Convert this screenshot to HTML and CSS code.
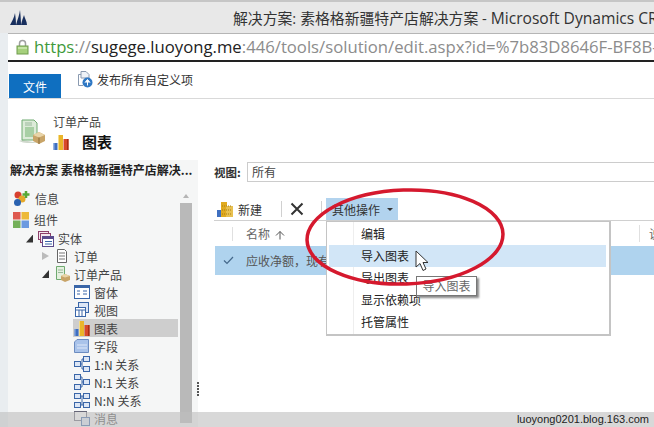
FILE: index.html
```html
<!DOCTYPE html>
<html lang="zh">
<head>
<meta charset="utf-8">
<title>解决方案</title>
<link rel="stylesheet" href="styles.css">
</head>
<body>
<svg class="defs" width="0" height="0">
  <defs>
    <symbol id="chart" viewBox="0 0 16 16">
      <rect x="0.500" y="9" width="4" height="7" fill="#3f6fc0"/>
      <rect x="0.500" y="9" width="1" height="7" fill="#8fb0e6"/>
      <rect x="5" y="1" width="5" height="15" fill="#eab52a"/>
      <rect x="5" y="1" width="1" height="15" fill="#f5dc88"/>
      <rect x="10.500" y="5" width="5" height="11" fill="#d8482a"/>
      <rect x="14" y="5" width="1.500" height="11" fill="#a82c14"/>
    </symbol>
  </defs>
</svg>

<header class="titlebar">
  <svg class="crm-logo" width="17" height="15" viewBox="0 0 17 15"><path d="M0 15C2 11 4 8 5 3C5.500 7 6 9 6 15ZM6 15C7.500 9 9.500 5 10 0C10.500 5 11 9 11 15ZM11 15C12 10 13 8 14 5C14.500 8 17 11 17 15Z" fill="#182f5e"/></svg>
  <div class="window-title">解决方案: 素格格新疆特产店解决方案 - <span class="title-latin">Microsoft Dynamics CRM</span></div>
</header>

<div class="shell">
  <div class="addressbar">
    <svg width="13" height="16" viewBox="0 0 13 16"><path d="M3.500 7V4.500a3 3 0 0 1 6 0V7" fill="none" stroke="#a0a0a0" stroke-width="1.500"/><rect x="1" y="7" width="11" height="8" fill="#a6d07c" stroke="#6f9c4c"/><rect x="2" y="8" width="9" height="2" fill="#c4e4a4"/></svg>
    <div class="url"><span class="url-https">https</span><span class="url-muted">://</span><span class="url-host">sugege.luoyong.me</span><span class="url-muted">:446/tools/solution/edit.aspx?id=%7b83D8646F-BF8B-</span></div>
  </div>

  <div class="ribbon">
    <div class="file-tab">文件</div>
    <div class="publish">
      <svg width="17" height="17" viewBox="0 0 17 17"><path d="M2.500 3.500H5M2.500 3.500V14.500H7" fill="none" stroke="#8a9ab0"/><path d="M5 0.500H10L13 3.500V7H5Z" fill="#eef2f7" stroke="#8a9ab0"/><circle cx="11.500" cy="11.500" r="5" fill="#2f78c4"/><path d="M11.500 14.500V10M9 11.500 11.500 8.500 14 11.500" fill="#fff" stroke="#fff"/></svg>
      <span>发布所有自定义项</span>
    </div>
  </div>

  <div class="pagehead">
    <svg class="head-icon" width="26" height="26" viewBox="0 0 26 26"><path d="M0 22C3 23 5 24 8 24L20 24 3 21Z" fill="#cfd8cc"/><path d="M3 1H15L18 4V21H3Z" fill="#dcebd8" stroke="#6faa70"/><rect x="6" y="8" width="9" height="10" fill="#a8cfa4"/><path d="M6 4H13M6 6H13" stroke="#9ab89c"/><path d="M20 13 26 16V22L20 25 14 22V16Z" fill="#c8a468"/><path d="M14 16 20 18.500 26 16 20 13Z" fill="#e8d4a8"/><path d="M20 18.500V25" stroke="#8a6a36"/></svg>
    <div class="head-text">
      <div class="head-parent">订单产品</div>
      <div class="head-row">
        <svg width="16" height="16"><use href="#chart"/></svg>
        <span class="head-title">图表</span>
      </div>
    </div>
  </div>

  <div class="workspace">
    <aside class="sidebar">
      <div class="side-title">解决方案 素格格新疆特产店解决...</div>
      <div class="side-body">
        <ul class="tree">
          <li class="lvl0"><svg width="17" height="17" viewBox="0 0 17 17"><circle cx="5" cy="5" r="3.500" fill="#d8402f"/><circle cx="9" cy="9" r="3.500" fill="#e6a828"/><circle cx="4.500" cy="12.500" r="3.500" fill="#2a62b0"/><path d="M13 1V8M9.500 4.500H16.500" stroke="#58a838" stroke-width="2.500"/></svg><span>信息</span></li>
          <li class="lvl0"><svg width="16" height="16" viewBox="0 0 16 16"><rect width="7.500" height="7.500" fill="#de5a50"/><rect x="8.500" width="7.500" height="7.500" fill="#edb93a"/><rect y="8.500" width="7.500" height="7.500" fill="#74b05a"/><rect x="8.500" y="8.500" width="7.500" height="7.500" fill="#6c9ae0"/></svg><span>组件</span></li>
          <li class="lvl1"><i class="tri open"></i><svg width="16" height="16" viewBox="0 0 16 16"><rect x="0.500" y="0.500" width="10" height="8" fill="#f3e6ee" stroke="#8c3f6a"/><rect x="2.500" y="2.500" width="10" height="9" fill="#f3e6ee" stroke="#8c3f6a"/><rect x="4.500" y="5.500" width="11" height="10" fill="#fff" stroke="#5a4a8c"/><rect x="5" y="6" width="10" height="2" fill="#5a4a8c"/><path d="M7 10.500H14M7 13H14" stroke="#3a66a8"/></svg><span>实体</span></li>
          <li class="lvl2"><i class="tri closed"></i><svg width="16" height="16" viewBox="0 0 16 16"><path d="M3.500 1.500H10.500L12.500 3.500V14.500H3.500Z" fill="#fff" stroke="#666"/><path d="M5 5H11M5 8H11M5 11H11" stroke="#777"/></svg><span>订单</span></li>
          <li class="lvl2"><i class="tri open"></i><svg width="16" height="16" viewBox="0 0 16 16"><path d="M2.500 0.500H10.500V13.500H2.500Z" fill="#e4f0df" stroke="#6faa70"/><path d="M4 4H9M4 6.500H9" stroke="#9ab89c"/><path d="M11 8 16 10V14L11 16 7 14V10Z" fill="#c8a468"/><path d="M7 10 11 11.500 16 10 11 8Z" fill="#e8d4a8"/></svg><span>订单产品</span></li>
          <li class="lvl3"><svg width="16" height="16" viewBox="0 0 16 16"><rect x="0.500" y="1.500" width="15" height="13" fill="#fff" stroke="#3a66a8"/><rect x="1" y="2" width="14" height="2" fill="#3a66a8"/><path d="M3 7H6M3 10H6M9 7H13M9 10H13" stroke="#3a66a8"/></svg><span>窗体</span></li>
          <li class="lvl3"><svg width="16" height="16" viewBox="0 0 16 16"><rect x="4.500" y="0.500" width="10" height="10" fill="#dce6f5" stroke="#3a66a8"/><rect x="1.500" y="5.500" width="10" height="9" fill="#fff" stroke="#3a66a8"/><path d="M2 8H11M5 8V14M8 8V14" stroke="#3a66a8"/></svg><span>视图</span></li>
          <li class="lvl3 current"><svg width="16" height="16"><use href="#chart"/></svg><span>图表</span></li>
          <li class="lvl3"><svg width="16" height="16" viewBox="0 0 16 16"><path d="M3 1.500H14.500V14.500H0.500V4Z" fill="#a9c3ea" stroke="#6c8cc0"/><path d="M3 7H13M3 10H13" stroke="#dfe8f8"/></svg><span>字段</span></li>
          <li class="lvl3"><svg width="16" height="16" viewBox="0 0 16 16"><g fill="#dce6f5" stroke="#3a66a8"><rect x="0.500" y="5.500" width="6" height="5"/><rect x="9.500" y="0.500" width="6" height="5"/><rect x="9.500" y="10.500" width="6" height="5"/></g><path d="M6.500 8H8V3H9.500M8 8V13H9.500" fill="none" stroke="#3a66a8"/></svg><span>1:N 关系</span></li>
          <li class="lvl3"><svg width="16" height="16" viewBox="0 0 16 16"><g fill="#dce6f5" stroke="#3a66a8"><rect x="0.500" y="0.500" width="6" height="5"/><rect x="0.500" y="10.500" width="6" height="5"/><rect x="9.500" y="5.500" width="6" height="5"/></g><path d="M6.500 3H8V13H6.500M8 8H9.500" fill="none" stroke="#3a66a8"/></svg><span>N:1 关系</span></li>
          <li class="lvl3"><svg width="16" height="16" viewBox="0 0 16 16"><g fill="#dce6f5" stroke="#3a66a8"><rect x="0.500" y="1.500" width="6" height="5"/><rect x="9.500" y="1.500" width="6" height="5"/><rect x="0.500" y="10.500" width="6" height="5"/><rect x="9.500" y="10.500" width="6" height="5"/></g><path d="M6.500 4H9.500M6.500 13H9.500M8 4V13" fill="none" stroke="#3a66a8"/></svg><span>N:N 关系</span></li>
          <li class="lvl3"><svg width="16" height="16" viewBox="0 0 16 16"><rect x="0.500" y="1.500" width="12" height="9" fill="#fff" stroke="#667"/><rect x="7.500" y="7.500" width="8" height="8" fill="#dce6f5" stroke="#3a66a8"/></svg><span>消息</span></li>
        </ul>
        <div class="scrollbar">
          <div class="scroll-up"></div>
          <div class="scroll-thumb"></div>
        </div>
      </div>
    </aside>

    <div class="splitter"><i></i><i></i><i></i><i></i><i></i></div>

    <main class="content">
      <div class="view-row">
        <label class="view-label">视图:</label>
        <div class="view-input">所有</div>
      </div>
      <div class="toolbar">
        <div class="tool-btn">
          <svg width="16" height="16" viewBox="0 0 16 16"><rect x="0" y="9" width="4" height="7" fill="#3f6fc0"/><rect x="4" y="1" width="6" height="15" fill="#e0aa20"/><rect x="9" y="5" width="7" height="11" fill="#e8c050"/><path d="M5 5H14M5 9H15M5 13H15" stroke="#a87c10" stroke-dasharray="1 1"/></svg>
          <span>新建</span>
        </div>
        <div class="tool-sep"></div>
        <svg class="tool-x" width="14" height="14" viewBox="0 0 14 14"><path d="M1.500 1.500 12.500 12.500M12.500 1.500 1.500 12.500" stroke="#333" stroke-width="2"/></svg>
        <div class="tool-sep sep-right"></div>
        <div class="tool-more"><span>其他操作</span><i class="caret"></i></div>
      </div>
      <div class="grid">
        <div class="grid-head">
          <div class="col-check"></div>
          <div class="col-name">名称 <svg width="10" height="10" viewBox="0 0 10 10"><path d="M1 5.500 5 1.500 9 5.500M5 1.500V9.500" fill="none" stroke="#555"/></svg></div>
          <div class="col-last">说</div>
        </div>
        <div class="grid-row">
          <svg class="check" width="11" height="9" viewBox="0 0 11 9"><path d="M1 4.500 4 7.500 10 1" fill="none" stroke="#44688a" stroke-width="1.200"/></svg>
          <span>应收净额，现有客户</span>
        </div>
      </div>
    </main>
  </div>
</div>

<div class="menu">
  <div class="menu-item">编辑</div>
  <div class="menu-item active">导入图表</div>
  <div class="menu-item">导出图表</div>
  <div class="menu-item">显示依赖项</div>
  <div class="menu-item">托管属性</div>
</div>

<svg class="cursor" width="16" height="22" viewBox="0 0 16 22"><path d="M1 1V17L5 13.500 8 20.500 11 19 8 12.500H13Z" fill="#fff" stroke="#333"/></svg>
<div class="tooltip">导入图表</div>

<svg class="annotation" width="210" height="112" viewBox="0 0 210 112"><ellipse cx="104" cy="56" rx="98" ry="47" transform="rotate(-2 104 56)" fill="none" stroke="#d5192e" stroke-width="3.500"/></svg>

<footer class="watermark">luoyong0201.blog.163.com</footer>
</body>
</html>
```

FILE: styles.css
```css
* { box-sizing: border-box; }
html, body { margin: 0; padding: 0; }
body {
  position: relative;
  width: 654px;
  height: 427px;
  overflow: hidden;
  background: #fff;
  color: #444;
  font-family: "Noto Sans CJK SC", "Noto Sans", sans-serif;
  font-size: 12px;
}
.defs { position: absolute; }
.titlebar {
  display: flex;
  align-items: center;
  height: 33px;
  padding-left: 10px;
  background: #e8e8e8;
  border-top: 2px solid #c6c6c6;
  overflow: hidden;
}
.crm-logo { flex: none; }
.window-title {
  flex: none;
  margin-left: 206px;
  white-space: nowrap;
  font-family: "Open Sans", "Noto Sans CJK SC", sans-serif;
  font-size: 14.850px;
  line-height: 20px;
  color: #333;
}
.title-latin { font-size: 15.600px; }
.shell {
  height: 394px;
  padding-left: 8px;
  background: #e9edf0;
}
.addressbar {
  display: flex;
  align-items: center;
  gap: 5px;
  height: 29px;
  padding-left: 8px;
  background: #fff;
  border-top: 1px solid #b5b5b5;
  border-bottom: 2px solid #222;
  overflow: hidden;
}
.addressbar svg { flex: none; }
.url {
  flex: none;
  white-space: nowrap;
  font-family: "Open Sans", sans-serif;
  font-size: 16.700px;
  line-height: 24px;
}
.url-https { color: #3f9a3a; }
.url-muted { color: #8c8c8c; }
.url-host { color: #222; }
.ribbon {
  display: flex;
  align-items: flex-end;
  height: 37px;
  background: #fff;
  border-bottom: 1px solid #d9d9d9;
}
.file-tab {
  width: 52px;
  height: 24px;
  margin-left: 1px;
  background: #0f6fc0;
  color: #fff;
  font-size: 12px;
  line-height: 25px;
  text-align: center;
}
.publish {
  display: flex;
  align-items: center;
  gap: 4px;
  align-self: flex-start;
  margin: 9px 0 0 15px;
  font-size: 12px;
  line-height: 17px;
  color: #333;
}
.pagehead {
  display: flex;
  height: 61px;
  padding: 20px 0 0 11px;
  background: #fff;
}
.head-icon { flex: none; margin-top: 0; }
.head-text { margin-left: 8px; margin-top: -5px; }
.head-parent { font-size: 12px; line-height: 16px; color: #444; }
.head-row { display: flex; align-items: center; gap: 13px; margin-top: 1px; }
.head-title { font-size: 15px; line-height: 22px; font-weight: 700; color: #111; }
.workspace {
  display: flex;
  height: 267px;
  background: #fff;
}
.sidebar {
  flex: none;
  width: 190px;
  background: #f5f6f6;
}
.side-title {
  height: 20px;
  padding-left: 2px;
  font-size: 12px;
  font-weight: 700;
  line-height: 19px;
  color: #222;
  white-space: nowrap;
  overflow: hidden;
}
.side-body { display: flex; height: 247px; }
.tree {
  flex: none;
  width: 172px;
  margin: 0;
  padding: 8px 0 0;
  list-style: none;
}
.tree li {
  display: flex;
  align-items: center;
  gap: 4px;
  height: 18px;
  white-space: nowrap;
  color: #444;
  font-size: 12px;
}
.tree svg { flex: none; }
.tree .lvl0 { padding-left: 5px; height: 21px; }
.lvl0 span { margin-left: 1px; }
.tree .lvl1 { padding-left: 18px; height: 17px; }
.lvl2 { padding-left: 34px; }
.lvl3 { margin: 0 2px 0 65px; padding-left: 1px; }
.tree .current { background: #cecece; }
.tri { flex: none; display: block; width: 7px; height: 8px; margin-right: 1px; }
.tri.open { background: #333; clip-path: polygon(100% 0, 100% 100%, 0 100%); }
.tri.closed { background: #bbb; clip-path: polygon(0 0, 100% 50%, 0 100%); }
.scrollbar { flex: none; width: 12px; margin-top: 8px; }
.scroll-up {
  width: 0;
  height: 0;
  margin: 6px auto 5px;
  border: 3px solid transparent;
  border-top: 0;
  border-bottom: 4px solid #b5b5b5;
}
.scroll-thumb { height: 220px; background: #b9b9b9; }
.splitter {
  flex: none;
  display: flex;
  flex-direction: column;
  gap: 1px;
  width: 17px;
  margin-left: -1px;
  padding: 222px 0 0 0;
}
.splitter i { display: block; width: 2px; height: 2px; background: #555; }
.content { flex: 1; min-width: 0; }
.view-row { display: flex; align-items: center; height: 21px; margin-top: 1px; }
.view-label { width: 33px; font-weight: 700; color: #333; font-size: 11.500px; }
.view-input {
  flex: 1;
  height: 20px;
  padding-left: 4px;
  border: 1px solid #ccc;
  border-right: 0;
  font-size: 12px;
  line-height: 18px;
  color: #444;
}
.toolbar {
  display: flex;
  align-items: center;
  height: 22px;
  margin-top: 16px;
  padding-left: 3px;
}
.tool-btn { display: flex; align-items: center; gap: 5px; font-size: 12px; color: #333; }
.tool-sep { width: 1px; height: 16px; margin: 0 8px 0 19px; background: #d0d0d0; }
.tool-sep.sep-right { margin: 0 4px 0 17px; }
.tool-x { flex: none; }
.tool-more {
  display: flex;
  align-items: center;
  gap: 7px;
  width: 72px;
  height: 22px;
  padding-left: 6px;
  background: #b2d3ee;
  font-size: 12px;
  color: #333;
}
.caret {
  width: 0;
  height: 0;
  border: 3px solid transparent;
  border-bottom: 0;
  border-top: 3px solid #333;
}
.grid { border-top: 1px solid #d0d0d0; }
.grid-head { display: flex; align-items: center; height: 25px; color: #666; font-size: 12px; }
.col-check { width: 19px; height: 14px; border-right: 1px solid #e0e0e0; }
.col-name { flex: none; width: 406px; padding-left: 13px; }
.col-name svg { vertical-align: -1px; margin-left: 2px; }
.col-last { flex: 1; padding-left: 9px; border-left: 1px solid #e0e0e0; white-space: nowrap; overflow: hidden; }
.grid-row {
  display: flex;
  align-items: center;
  height: 29px;
  margin-left: 1px;
  padding-left: 8px;
  gap: 12px;
  background: #afd3ee;
  color: #555;
  font-size: 12px;
}
.check { flex: none; }
.menu {
  position: absolute;
  left: 326px;
  top: 221px;
  width: 285px;
  height: 115px;
  padding-top: 1px;
  background: #fff linear-gradient(#eee, #eee) 26px 0 / 1px 100% no-repeat;
  border: 1px solid #c4c4c4;
  border-width: 1px 2px 2px 1px;
}
.menu-item {
  height: 22px;
  padding-left: 34px;
  font-size: 12px;
  line-height: 22px;
  color: #222;
}
.menu-item.active {
  height: 22px;
  margin: 0 3px 0 2px;
  padding-left: 32px;
  background: #d2e6f7;
}
.cursor { position: absolute; left: 415px; top: 250px; }
.tooltip {
  position: absolute;
  left: 416px;
  top: 276px;
  width: 61px;
  height: 20px;
  border: 1px solid #777;
  background: #fff;
  box-shadow: 2px 2px 2px #888;
  font-size: 12px;
  line-height: 18px;
  text-align: center;
  color: #666;
}
.annotation { position: absolute; left: 301px; top: 181px; }
.watermark {
  position: absolute;
  left: 0;
  right: 0;
  bottom: 0;
  height: 15px;
  padding-right: 5px;
  background: rgba(190, 190, 190, 0.6);
  font-family: "Liberation Sans", sans-serif;
  font-size: 11px;
  line-height: 15px;
  text-align: right;
  color: #222;
}
```
